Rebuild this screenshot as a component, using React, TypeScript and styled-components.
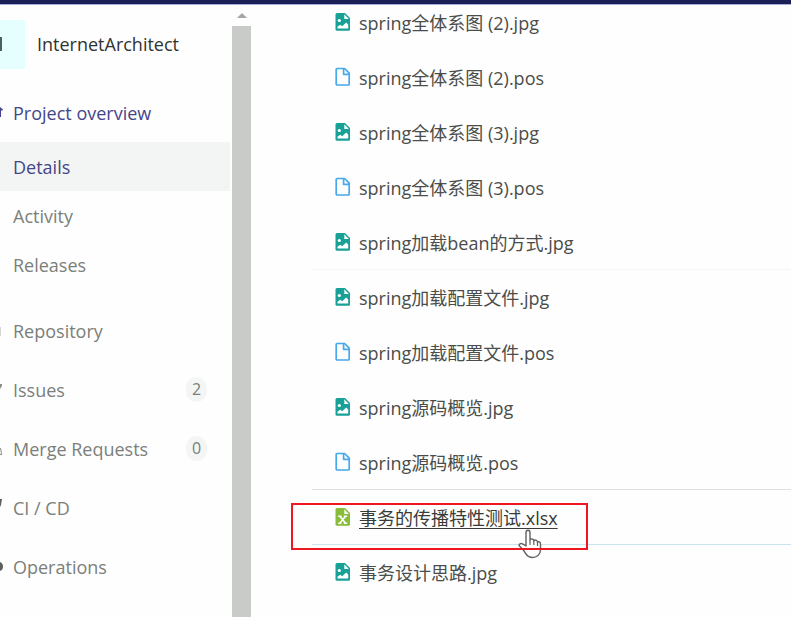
import React from "react";
import styled, { createGlobalStyle, css } from "styled-components";

const GlobalStyle = createGlobalStyle`
  * { box-sizing: border-box; }
  body {
    margin: 0;
    background: #fefefe;
    color: #4a4d4a;
    font-family: "Open Sans", "Noto Sans CJK SC", sans-serif;
    font-size: 18px;
  }
  a { color: inherit; text-decoration: none; }
  ul { list-style: none; margin: 0; padding: 0; }
`;

const Page = styled.div`
  display: flex;
  flex-direction: column;
  height: 100vh;
  overflow: hidden;
`;

const TopBar = styled.header`
  flex: none;
  height: 5px;
  background: #1c1f55;
  border-bottom: 1px solid #a9add9;
`;

const Body = styled.div`
  display: flex;
  flex: 1;
  min-height: 0;
`;

const Sidebar = styled.nav`
  flex: none;
  width: 232px;
  padding-right: 2px;
  color: #7b7e7b;
`;

const ProjectHeader = styled.a`
  display: flex;
  align-items: center;
  gap: 12px;
  height: 78px;
  color: #303330;
  font-weight: 500;
`;

const Avatar = styled.span`
  display: flex;
  align-items: center;
  width: 25px;
  height: 49px;
  background: #e5fffe;
  border-radius: 0 2px 2px 0;
`;

const NavLink = styled.a<{ $sub?: boolean; $current?: boolean; $strong?: boolean }>`
  display: flex;
  align-items: center;
  height: ${(p) => (p.$sub ? 49 : 59)}px;
  padding-right: 23px;
  ${(p) => p.$current && css`background: #f2f5f4;`}
  ${(p) => (p.$current || p.$strong) && css`
    color: #45458a;
    font-weight: 500;
  `}
`;

const SubList = styled.ul`
  padding-bottom: 12px;
`;

const IconSlot = styled.span`
  display: flex;
  flex: none;
  width: 13px;
`;

const Count = styled.span`
  margin-left: auto;
  min-width: 21px;
  padding: 0 5px;
  border-radius: 12px;
  background: #f3f6f4;
  font-size: 16px;
  line-height: 25px;
  text-align: center;
`;

const ScrollTrack = styled.div`
  display: flex;
  flex-direction: column;
  align-items: center;
  flex: none;
  gap: 8px;
  width: 19px;
  padding-top: 8px;
`;

const ScrollThumb = styled.div`
  flex: 1;
  width: 100%;
  background: #c8cbc8;
`;

const Files = styled.main`
  flex: 1;
  min-width: 0;
  padding-left: 61px;
  overflow: hidden;
`;

const FileList = styled.ul`
  margin-top: -10px;
`;

const FileRow = styled.li<{ $line?: string }>`
  position: relative;
  display: flex;
  align-items: center;
  gap: 8px;
  height: 55px;
  padding-left: 23px;
  border-bottom: 1px solid ${(p) => p.$line || "transparent"};
`;

const FileLink = styled.a<{ $hovered?: boolean }>`
  padding-top: 2px;
  line-height: 26px;
  white-space: nowrap;
  ${(p) => p.$hovered && css`
    color: #383b38;
    text-decoration: underline;
    text-underline-offset: 3px;
  `}
`;

const Highlight = styled.div`
  position: absolute;
  left: -21px;
  top: 13px;
  width: 297px;
  height: 47px;
  border: 2px solid #ee1620;
  pointer-events: none;
`;

const Pointer = styled.svg`
  position: absolute;
  left: 206px;
  top: 39px;
`;

type Kind = "jpg" | "pos" | "xlsx";

function FileIcon({ kind }: { kind: Kind }) {
  if (kind === "pos") {
    return (
      <svg width="16" height="20" viewBox="0 0 16 20" fill="none" stroke="#45a9ec" strokeWidth="1.7" strokeLinejoin="round" aria-hidden="true">
        <path d="M2.2 1.500H9.600L14.200 6.200V17Q14.200 18 13.200 18H2.200Q1.200 18 1.200 17V2.500Q1.200 1.500 2.200 1.500Z" />
        <path d="M8.600 1.800V7.300H14" />
      </svg>
    );
  }
  const color = kind === "jpg" ? "#18a196" : "#87bd38";
  return (
    <svg width="16" height="20" viewBox="0 0 16 20" aria-hidden="true">
      <path d="M2 1H10L15 6V17.200Q15 18.800 13.500 18.800H2Q.5 18.800 .5 17.200V2.500Q.5 1 2 1Z" fill={color} />
      <path d="M9.300 2.300V6.900H13.800Z" fill="#fff" />
      {kind === "jpg" ? (
        <>
          <circle cx="4.300" cy="8.500" r="1.600" fill="#fff" />
          <path d="M2.500 16.500V14.700L5.200 12.700L7.200 14.200L11.200 10.600L13.200 12.400V16.500Z" fill="#fff" />
        </>
      ) : (
        <path d="M3.200 9.300H6.500M8.800 9.300H12.200M3.200 16.200H6.500M8.800 16.200H12.200M4.800 9.300L10.600 16.200M10.600 9.300L4.800 16.200" stroke="#fff" strokeWidth="1.600" fill="none" />
      )}
    </svg>
  );
}

const files: { name: string; kind: Kind; line?: string; hovered?: boolean }[] = [
  { name: "spring全体系图 (2).jpg", kind: "jpg" },
  { name: "spring全体系图 (2).pos", kind: "pos" },
  { name: "spring全体系图 (3).jpg", kind: "jpg" },
  { name: "spring全体系图 (3).pos", kind: "pos" },
  { name: "spring加载bean的方式.jpg", kind: "jpg", line: "#f5f6f6" },
  { name: "spring加载配置文件.jpg", kind: "jpg" },
  { name: "spring加载配置文件.pos", kind: "pos" },
  { name: "spring源码概览.jpg", kind: "jpg" },
  { name: "spring源码概览.pos", kind: "pos", line: "#dde0e0" },
  { name: "事务的传播特性测试.xlsx", kind: "xlsx", line: "#cbe3ed", hovered: true },
  { name: "事务设计思路.jpg", kind: "jpg" },
];

const sections = [
  { name: "Repository", icon: "M0 5H1V14H0Z", tone: "#d5d8d5" },
  { name: "Issues", icon: "M0 3H2V5L0 8Z", tone: "#8c8f8c", count: 2 },
  { name: "Merge Requests", icon: "M0 8H1L2 14V15H0V14H1Z", tone: "#8c8f8c", count: 0 },
  { name: "CI / CD", icon: "M0 0H2L1 6L0 8Z", tone: "#5c5f5c" },
  { name: "Operations", icon: "M0 4Q3 5 3 8.500Q3 12 0 13Z", tone: "#5c5f5c" },
];

function EdgeIcon({ path, tone }: { path: string; tone: string }) {
  return (
    <IconSlot>
      <svg width="4" height="18" viewBox="0 0 4 18" aria-hidden="true">
        <path d={path} fill={tone} />
      </svg>
    </IconSlot>
  );
}

export default function App() {
  return (
    <Page>
      <GlobalStyle />
      <TopBar />
      <Body>
        <Sidebar aria-label="Project">
          <ProjectHeader href="#">
            <Avatar>
              <svg width="2" height="14" viewBox="0 0 2 14" aria-hidden="true">
                <path d="M0 0H2V14H0Z" fill="#49625f" />
              </svg>
            </Avatar>
            InternetArchitect
          </ProjectHeader>
          <NavLink href="#" $strong>
            <EdgeIcon path="M0 3L3 5.500L2 7L1 6V13H0Z" tone="#45458a" />
            Project overview
          </NavLink>
          <SubList>
            {["Details", "Activity", "Releases"].map((name) => (
              <li key={name}>
                <NavLink href="#" $sub $current={name === "Details"}>
                  <IconSlot />
                  {name}
                </NavLink>
              </li>
            ))}
          </SubList>
          <ul>
            {sections.map((s) => (
              <li key={s.name}>
                <NavLink href="#">
                  <EdgeIcon path={s.icon} tone={s.tone} />
                  {s.name}
                  {s.count !== undefined && <Count>{s.count}</Count>}
                </NavLink>
              </li>
            ))}
          </ul>
        </Sidebar>
        <ScrollTrack aria-hidden="true">
          <svg width="10" height="5" viewBox="0 0 10 5">
            <path d="M5 0L10 5H0Z" fill="#a3a6a3" />
          </svg>
          <ScrollThumb />
        </ScrollTrack>
        <Files>
          <FileList>
            {files.map((f) => (
              <FileRow key={f.name} $line={f.line}>
                <FileIcon kind={f.kind} />
                <FileLink href="#" $hovered={f.hovered}>{f.name}</FileLink>
                {f.hovered && (
                  <>
                    <Pointer width="24" height="30" viewBox="0 0 24 30" aria-hidden="true">
                      <path
                        d="M8 17V3.500Q8 1.200 10 1.200Q12 1.200 12 3.500V11Q12.500 9.500 14.200 10Q15.800 10.300 15.800 12Q16.500 10.700 18 11.200Q19.500 11.700 19.500 13.200Q20.300 12.300 21.500 13Q22.500 13.500 22.500 15V21Q22.500 24 20 26.500Q17.500 28.500 14.500 28.500Q10.500 28.500 8 25L5 20.500L1.500 17Q.5 15.500 2 14.800Q3.500 14 5 15.200Z"
                        fill="#fff" stroke="#606360" strokeWidth="1.400" strokeLinejoin="round"
                      />
                      <path d="M12 11V16M15.800 12V16M19.500 13.200V17" stroke="#606360" strokeWidth="1.200" />
                    </Pointer>
                    <Highlight />
                  </>
                )}
              </FileRow>
            ))}
          </FileList>
        </Files>
      </Body>
    </Page>
  );
}
